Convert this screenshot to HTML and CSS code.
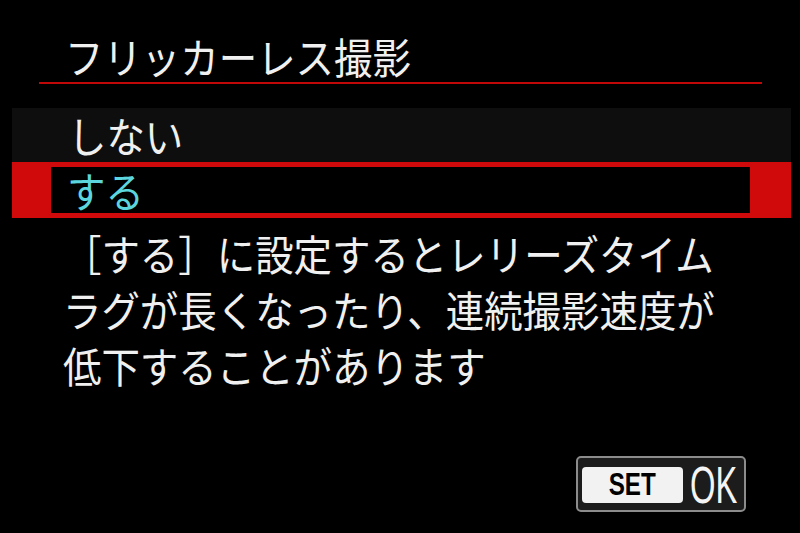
FILE: index.html
```html
<!DOCTYPE html>
<html lang="ja">
<head>
<meta charset="utf-8">
<title>フリッカーレス撮影</title>
<link rel="stylesheet" href="styles.css">
</head>
<body>
<div class="screen">
  <header class="head">
    <h1 class="title"><span class="sq">フリッカーレス撮影</span></h1>
    <div class="rule"></div>
  </header>
  <ul class="menu">
    <li class="item"><span class="sq">しない</span></li>
    <li class="item selected"><div class="inner"><span class="sq">する</span></div></li>
  </ul>
  <p class="desc"><span class="sq">［する］に設定するとレリーズタイム<br>ラグが長くなったり、連続撮影速度が<br>低下することがあります</span></p>
  <footer class="foot">
    <div class="btn">
      <div class="set"><span class="set-t">SET</span></div>
      <span class="ok">OK</span>
    </div>
  </footer>
</div>
</body>
</html>
```
FILE: styles.css
```css
html, body {
  margin: 0;
  padding: 0;
  background: #000;
}
.screen {
  width: 800px;
  height: 533px;
  overflow: hidden;
  background: #000;
  color: #f0f0f0;
  font-family: "Noto Sans CJK JP", "Noto Sans", sans-serif;
  font-size: 42px;
}
.sq {
  display: inline-block;
  transform: scaleX(0.915);
  transform-origin: left center;
  white-space: nowrap;
}
.head {
  padding-top: 34px;
}
.title {
  margin: 0;
  padding-left: 65px;
  font-size: 42px;
  font-weight: 400;
  line-height: 44px;
  height: 44px;
}
.rule {
  margin: 4px 0 0 39px;
  width: 723px;
  height: 2px;
  background: #c00808;
}
.menu {
  list-style: none;
  margin: 24px 0 0 12px;
  padding: 0;
  width: 779px;
}
.item {
  height: 54px;
  line-height: 54px;
  padding-left: 56px;
  background: #0e0e0e;
}
.item.selected {
  height: 56px;
  padding: 5px 41px 5px 39px;
  box-sizing: border-box;
  background: #d00a0a;
  line-height: 46px;
  color: #5cd6de;
}
.inner {
  height: 46px;
  background: #000;
  padding-left: 16px;
}
.desc {
  margin: 7px 0 0 0;
  padding-left: 63px;
  line-height: 56px;
}
.foot {
  display: flex;
  justify-content: flex-end;
  padding-right: 54px;
  margin-top: 63px;
}
.btn {
  display: flex;
  align-items: center;
  box-sizing: border-box;
  width: 170px;
  height: 56px;
  border: 2px solid #8c8c8c;
  border-radius: 5px;
  background: #1c1c1c;
  padding-left: 4px;
  padding-top: 2px;
}
.set {
  flex: none;
  width: 101px;
  height: 36px;
  background: #f2f2f2;
  border-radius: 4px;
  display: flex;
  align-items: center;
  justify-content: center;
}
.set-t {
  display: inline-block;
  font-family: "Liberation Sans", Arial, sans-serif;
  font-weight: 700;
  font-size: 31px;
  line-height: 36px;
  color: #000;
  transform: scaleX(0.78);
}
.ok {
  flex: none;
  display: inline-block;
  width: 48px;
  margin-left: 7px;
  font-family: "Liberation Sans", Arial, sans-serif;
  font-size: 52px;
  line-height: 52px;
  color: #f4f4f4;
  white-space: nowrap;
  transform: scaleX(0.63);
  transform-origin: left center;
}
```
